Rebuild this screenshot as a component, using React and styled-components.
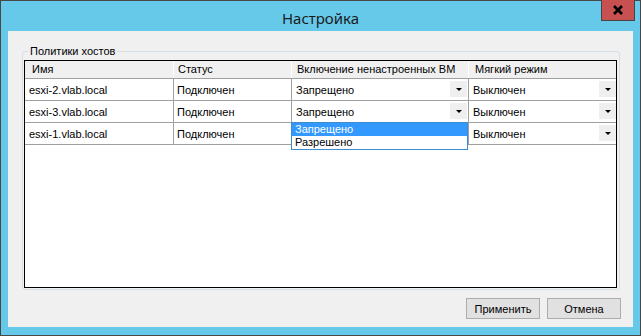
import React from 'react'
import styled, { createGlobalStyle } from 'styled-components'

const GlobalStyle = createGlobalStyle`
  html, body {
    margin: 0;
    padding: 0;
    background: #ffffff;
  }
  * {
    box-sizing: border-box;
  }
`

const columns = [
  { title: 'Имя', width: 149, pad: 7 },
  { title: 'Статус', width: 118, pad: 4 },
  { title: 'Включение ненастроенных ВМ', width: 177, pad: 5 },
  { title: 'Мягкий режим', width: 147, pad: 6 },
]

const hosts = [
  { name: 'esxi-2.vlab.local', status: 'Подключен', power: 'Запрещено', soft: 'Выключен' },
  { name: 'esxi-3.vlab.local', status: 'Подключен', power: 'Запрещено', soft: 'Выключен', open: true },
  { name: 'esxi-1.vlab.local', status: 'Подключен', power: 'Запрещено', soft: 'Выключен', hidden: true },
]

const template = columns.map((c) => `${c.width}px`).join(' ')

const App = () => {
  return (
    <>
      <GlobalStyle />
      <Frame>
        <TitleBar>
          <Title>Настройка</Title>
          <CloseButton>
            <svg width="12" height="10" viewBox="0 0 12 10">
              <path d="M2 1 L10 9 M10 1 L2 9" stroke="#000" strokeWidth="2.6" />
            </svg>
          </CloseButton>
        </TitleBar>
        <Client>
          <GroupBox>
            <GroupLabel>Политики хостов</GroupLabel>
            <Grid>
              <HeaderRow>
                {columns.map((c, i) => (
                  <HeaderCell key={c.title} $pad={c.pad} $last={i === columns.length - 1}>
                    {c.title}
                  </HeaderCell>
                ))}
              </HeaderRow>
              {hosts.map((h) => (
                <Row key={h.name}>
                  <Cell>{h.name}</Cell>
                  <Cell $pad={3}>{h.status}</Cell>
                  <ComboCell>
                    {!h.hidden && (
                      <>
                        <ComboText>{h.power}</ComboText>
                        <DropButton>
                          <Arrow />
                        </DropButton>
                      </>
                    )}
                    {h.open && (
                      <DropList>
                        <DropItem $selected>Запрещено</DropItem>
                        <DropItem>Разрешено</DropItem>
                      </DropList>
                    )}
                  </ComboCell>
                  <ComboCell $last>
                    <ComboText>{h.soft}</ComboText>
                    <DropButton $right={0}>
                      <Arrow />
                    </DropButton>
                  </ComboCell>
                </Row>
              ))}
            </Grid>
          </GroupBox>
          <ButtonBar>
            <Button>Применить</Button>
            <Button>Отмена</Button>
          </ButtonBar>
        </Client>
      </Frame>
    </>
  )
}

export default App

const Frame = styled.div`
  width: 641px;
  height: 336px;
  border: 1px solid #474747;
  background: #66c9ea;
  padding: 0 7px 8px 7px;
  display: flex;
  flex-direction: column;
  font-family: "Liberation Sans", Arial, sans-serif;
  font-size: 11px;
  color: #000;
`

const TitleBar = styled.div`
  position: relative;
  height: 30px;
  display: flex;
  align-items: center;
  justify-content: center;
`

const Title = styled.div`
  font-family: "Noto Sans", "Open Sans", sans-serif;
  font-size: 15px;
  color: #1a1a1a;
  padding-top: 3px;
`

const CloseButton = styled.div`
  position: absolute;
  top: -1px;
  right: -2px;
  width: 34px;
  height: 21px;
  background: #c75050;
  border: 1px solid #454545;
  border-top: none;
  display: flex;
  align-items: center;
  justify-content: center;
`

const Client = styled.div`
  flex: 1;
  background: #f0f0f0;
  padding: 14px 12px 8px 14px;
  display: flex;
  flex-direction: column;
`

const GroupBox = styled.fieldset`
  margin: 0 1px 0 0;
  padding: 2px 2px 1px 1px;
  border: 1px solid #d5dfe5;
  border-radius: 3px;
  min-width: 0;
`

const GroupLabel = styled.legend`
  margin-left: 4px;
  padding: 0 2px;
  line-height: 13px;
  font-size: 11px;
`

const Grid = styled.div`
  height: 228px;
  border: 1px solid #000;
  background: #fff;
  display: flex;
  flex-direction: column;
`

const HeaderRow = styled.div`
  display: grid;
  grid-template-columns: ${template};
  height: 18px;
  background: #f0f0f0;
  border-bottom: 1px solid #a0a0a0;
`

const HeaderCell = styled.div`
  padding-left: ${(p) => p.$pad}px;
  border-right: ${(p) => (p.$last ? 'none' : '1px solid #ffffff')};
  line-height: 17px;
  white-space: nowrap;
`

const Row = styled.div`
  display: grid;
  grid-template-columns: ${template};
  height: 22px;
`

const Cell = styled.div`
  position: relative;
  display: flex;
  align-items: center;
  padding-left: ${(p) => p.$pad ?? 4}px;
  border-right: ${(p) => (p.$last ? 'none' : '1px solid #a0a0a0')};
  border-bottom: 1px solid #a0a0a0;
  white-space: nowrap;
`

const ComboCell = styled(Cell)`
  padding-left: 4px;
  justify-content: space-between;
`

const ComboText = styled.span`
  padding-top: 1px;
`

const DropButton = styled.div`
  width: 17px;
  height: 16px;
  margin-right: ${(p) => p.$right ?? 1}px;
  margin-top: -1px;
  background: #efefef;
  display: flex;
  align-items: center;
  justify-content: center;
`

const Arrow = styled.span`
  width: 0;
  height: 0;
  border-left: 3px solid transparent;
  border-right: 3px solid transparent;
  border-top: 3px solid #000;
`

const DropList = styled.div`
  position: absolute;
  left: -1px;
  top: 100%;
  width: 177px;
  border: 1px solid #3c8cd0;
  background: #fff;
  z-index: 2;
`

const DropItem = styled.div`
  height: 13px;
  line-height: 13px;
  padding-left: 3px;
  background: ${(p) => (p.$selected ? '#3399ff' : '#fff')};
  color: ${(p) => (p.$selected ? '#fff' : '#000')};
`

const ButtonBar = styled.div`
  display: flex;
  justify-content: flex-end;
  gap: 7px;
  margin-top: 8px;
`

const Button = styled.div`
  width: 74px;
  height: 21px;
  border: 1px solid #adadad;
  background: #e1e1e1;
  display: flex;
  align-items: center;
  justify-content: center;
`
